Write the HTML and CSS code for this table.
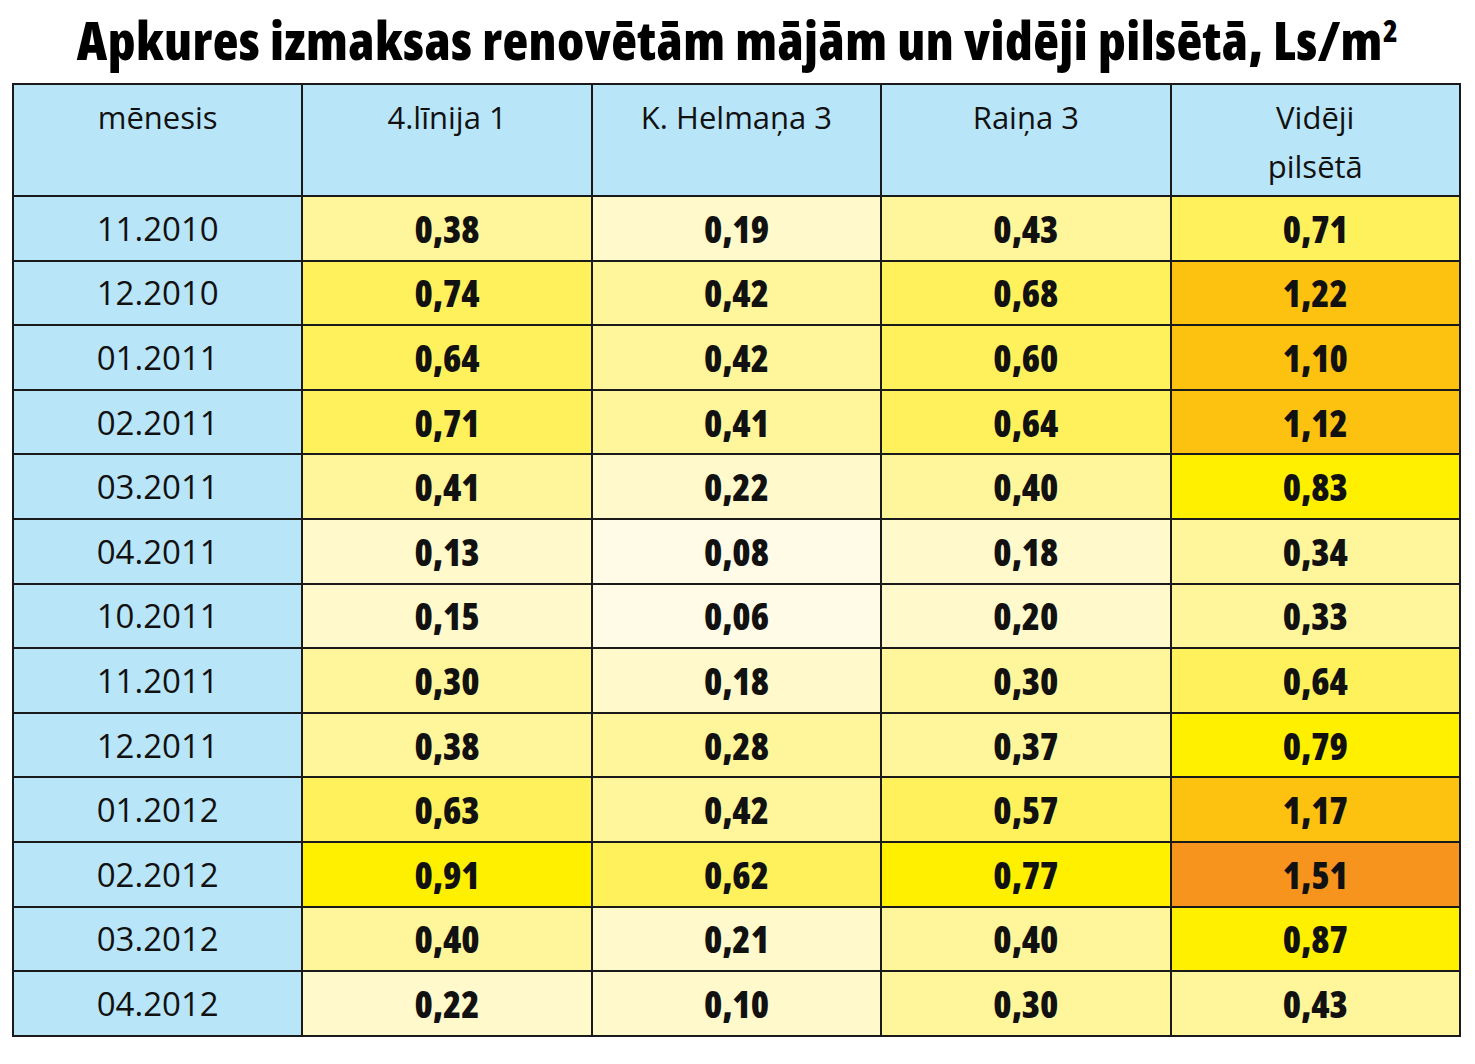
FILE: index.html
```html
<!DOCTYPE html>
<html lang="lv">
<head>
<meta charset="utf-8">
<title>Apkures izmaksas</title>
<link rel="stylesheet" href="styles.css">
</head>
<body>
<h1 class="title">Apkures izmaksas renovētām mājām un vidēji pilsētā, Ls/m<sup class="sq">2</sup></h1>
<table class="grid">
  <thead>
    <tr class="head">
      <th>mēnesis</th>
      <th>4.līnija 1</th>
      <th>K. Helmaņa 3</th>
      <th>Raiņa 3</th>
      <th>Vidēji<br>pilsētā</th>
    </tr>
  </thead>
  <tbody>
    <tr><th>11.2010</th><td class="c3">0,38</td><td class="c2">0,19</td><td class="c3">0,43</td><td class="c4">0,71</td></tr>
    <tr><th>12.2010</th><td class="c4">0,74</td><td class="c3">0,42</td><td class="c4">0,68</td><td class="c6">1,22</td></tr>
    <tr><th>01.2011</th><td class="c4">0,64</td><td class="c3">0,42</td><td class="c4">0,60</td><td class="c6">1,10</td></tr>
    <tr><th>02.2011</th><td class="c4">0,71</td><td class="c3">0,41</td><td class="c4">0,64</td><td class="c6">1,12</td></tr>
    <tr><th>03.2011</th><td class="c3">0,41</td><td class="c2">0,22</td><td class="c3">0,40</td><td class="c5">0,83</td></tr>
    <tr><th>04.2011</th><td class="c2">0,13</td><td class="c1">0,08</td><td class="c2">0,18</td><td class="c3">0,34</td></tr>
    <tr><th>10.2011</th><td class="c2">0,15</td><td class="c1">0,06</td><td class="c2">0,20</td><td class="c3">0,33</td></tr>
    <tr><th>11.2011</th><td class="c3">0,30</td><td class="c2">0,18</td><td class="c3">0,30</td><td class="c4">0,64</td></tr>
    <tr><th>12.2011</th><td class="c3">0,38</td><td class="c3">0,28</td><td class="c3">0,37</td><td class="c5">0,79</td></tr>
    <tr><th>01.2012</th><td class="c4">0,63</td><td class="c3">0,42</td><td class="c4">0,57</td><td class="c6">1,17</td></tr>
    <tr><th>02.2012</th><td class="c5">0,91</td><td class="c4">0,62</td><td class="c5">0,77</td><td class="c7">1,51</td></tr>
    <tr><th>03.2012</th><td class="c3">0,40</td><td class="c2">0,21</td><td class="c3">0,40</td><td class="c5">0,87</td></tr>
    <tr><th>04.2012</th><td class="c2">0,22</td><td class="c2">0,10</td><td class="c3">0,30</td><td class="c3">0,43</td></tr>
  </tbody>
</table>
</body>
</html>
```

FILE: styles.css
```css
html, body {
  margin: 0;
  padding: 0;
  background: #ffffff;
}

body {
  font-family: "Open Sans", "Noto Sans", sans-serif;
  color: #111;
}

.title {
  margin: 0;
  padding-top: 10px;
  height: 75px;
  box-sizing: border-box;
  text-align: center;
  font-size: 53px;
  line-height: 60px;
  font-weight: 800;
  font-stretch: 75%;
  letter-spacing: 0.45px;
  color: #000;
  white-space: nowrap;
}

.sq {
  font-size: 30px;
  vertical-align: 18px;
  line-height: 0;
}

.grid {
  margin-left: 12px;
  margin-top: 8px;
  width: 1449px;
  table-layout: fixed;
  border-collapse: collapse;
  border: 2px solid #1a1a1a;
}

.grid th,
.grid td {
  border: 2px solid #1a1a1a;
  text-align: center;
  padding: 0;
}

.head th {
  height: 112px;
  box-sizing: border-box;
  vertical-align: top;
  padding-top: 8px;
  background: #b9e5f8;
  font-weight: 400;
  font-size: 31px;
  font-stretch: 100%;
  line-height: 49px;
}

tbody tr {
  height: 64.6px;
}

tbody th {
  background: #b9e5f8;
  font-weight: 400;
  font-size: 33px;
  font-stretch: 91%;
  padding-top: 15px;
}

tbody td {
  font-weight: 800;
  font-size: 37px;
  font-stretch: 80%;
  padding-top: 14px;
}

.c1 { background: #fffbe6; }
.c2 { background: #fff9cb; }
.c3 { background: #fff59b; }
.c4 { background: #fff15c; }
.c5 { background: #fff000; }
.c6 { background: #fdc210; }
.c7 { background: #f7941e; }
```
